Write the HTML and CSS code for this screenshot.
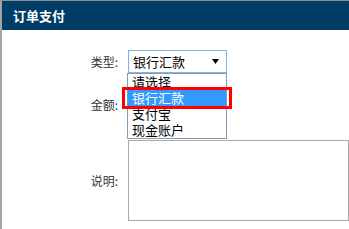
FILE: index.html
```html
<!DOCTYPE html>
<html lang="zh-CN">
<head>
    <meta charset="UTF-8">
    <title>订单支付</title>
    <link rel="stylesheet" href="styles.css">
</head>
<body>
    <div class="dialog">
        <div class="dialog-title">订单支付</div>
        <div class="dialog-body">
            <div class="form-row">
                <label class="form-label">类型:</label>
                <div class="select-wrap">
                    <div class="select">
                        <span>银行汇款</span>
                        <svg class="select-arrow" width="7" height="5" viewBox="0 0 7 5"><polygon points="0,0 7,0 3.5,5" fill="#000"/></svg>
                    </div>
                    <ul class="select-list">
                        <li>请选择</li>
                        <li class="selected">银行汇款</li>
                        <li>支付宝</li>
                        <li>现金账户</li>
                    </ul>
                    <div class="mark"></div>
                </div>
            </div>
            <div class="form-row">
                <label class="form-label">金额:</label>
                <input class="input" type="text">
            </div>
            <div class="form-row row-desc">
                <label class="form-label">说明:</label>
                <textarea class="textarea"></textarea>
            </div>
        </div>
    </div>
</body>
</html>
```
FILE: styles.css
```css
body{
    margin: 0;
    font-family: "Noto Sans CJK SC", "Liberation Sans", sans-serif;
}
ul, li{
    list-style: none;
    padding: 0;
    margin: 0;
}
.dialog{
    width: 347px;
    height: 228px;
    border-top: 1px solid #8c8c8c;
    border-left: 2px solid #a3a3a3;
    overflow: hidden;
    background: #fff;
}
.dialog-title{
    height: 29px;
    line-height: 29px;
    padding-left: 11px;
    background: #003d66;
    color: #fff;
    font-size: 13px;
    font-weight: bold;
}
.dialog-body{
    padding-top: 20px;
}
.form-row{
    display: flex;
    align-items: center;
    gap: 10px;
}
.form-row + .form-row{
    margin-top: 20px;
}
.form-row.row-desc{
    margin-top: 24px;
}
.form-label{
    width: 116px;
    flex: none;
    text-align: right;
    font-size: 12px;
    color: #333;
}
.select-wrap{
    position: relative;
}
.select{
    box-sizing: border-box;
    width: 99px;
    height: 23px;
    border: 1px solid #7eb4ea;
    display: flex;
    align-items: center;
    justify-content: space-between;
    padding: 0 4px 0 4px;
    font-size: 13px;
    color: #000;
}
.select-arrow{
    margin-right: 3px;
}
.select-list{
    position: absolute;
    left: -1px;
    top: 23px;
    width: 98px;
    border: 1px solid #7f9db9;
    background: #fff;
    z-index: 2;
}
.select-list li{
    height: 16px;
    line-height: 16px;
    padding-left: 4px;
    font-size: 13px;
    color: #000;
}
.select-list .selected{
    background: #3399ff;
    color: #fff;
}
.mark{
    position: absolute;
    left: -6px;
    top: 37px;
    width: 104px;
    height: 16px;
    border: 3px solid #f00;
    z-index: 3;
}
.input{
    box-sizing: border-box;
    width: 99px;
    height: 23px;
    border: 1px solid #a9a9a9;
    margin: 0;
}
.textarea{
    box-sizing: border-box;
    width: 260px;
    height: 81px;
    border: 1px solid #a9a9a9;
    margin: 0;
    resize: none;
    padding: 0;
}
```
